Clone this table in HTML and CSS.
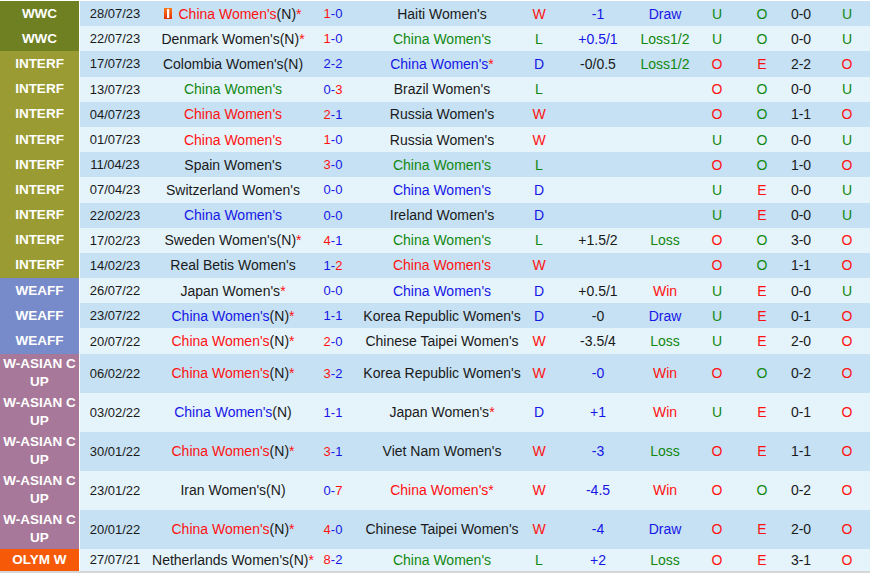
FILE: index.html
```html
<!DOCTYPE html>
<html>
<head>
<meta charset="utf-8">
<title>China Women's results</title>
<link rel="stylesheet" href="styles.css">
</head>
<body>
<div class="table">
  <div class="row odd">
    <div class="c lg wwc">WWC</div><div class="c date">28/07/23</div>
    <div class="c home"><svg class="flag" width="8" height="11" viewBox="0 0 8 11"><defs><linearGradient id="fg" x1="0" y1="0" x2="0" y2="1"><stop offset="0" stop-color="#ff7a1a"/><stop offset="1" stop-color="#e0300a"/></linearGradient></defs><rect width="8" height="11" fill="url(#fg)"/><rect x="3" y="1" width="2.2" height="9" fill="#fff"/></svg><span class="r">China Women's</span>(N)<span class="r">*</span></div>
    <div class="c score"><span class="r">1</span><span class="b">-0</span></div>
    <div class="c away">Haiti Women's</div><div class="c res r">W</div>
    <div class="c hc b">-1</div><div class="c oc b">Draw</div>
    <div class="c uo g">U</div><div class="c oe g">O</div><div class="c ht">0-0</div><div class="c hu g">U</div>
  </div>
  <div class="row even">
    <div class="c lg wwc">WWC</div><div class="c date">22/07/23</div>
    <div class="c home">Denmark Women's(N)<span class="r">*</span></div>
    <div class="c score"><span class="r">1</span><span class="b">-0</span></div>
    <div class="c away g">China Women's</div><div class="c res g">L</div>
    <div class="c hc b">+0.5/1</div><div class="c oc g">Loss1/2</div>
    <div class="c uo g">U</div><div class="c oe g">O</div><div class="c ht">0-0</div><div class="c hu g">U</div>
  </div>
  <div class="row odd">
    <div class="c lg interf">INTERF</div><div class="c date">17/07/23</div>
    <div class="c home">Colombia Women's(N)</div>
    <div class="c score b">2-2</div>
    <div class="c away"><span class="b">China Women's</span><span class="r">*</span></div><div class="c res b">D</div>
    <div class="c hc">-0/0.5</div><div class="c oc g">Loss1/2</div>
    <div class="c uo r">O</div><div class="c oe r">E</div><div class="c ht">2-2</div><div class="c hu r">O</div>
  </div>
  <div class="row even">
    <div class="c lg interf">INTERF</div><div class="c date">13/07/23</div>
    <div class="c home g">China Women's</div>
    <div class="c score"><span class="b">0-</span><span class="r">3</span></div>
    <div class="c away">Brazil Women's</div><div class="c res g">L</div>
    <div class="c hc"></div><div class="c oc"></div>
    <div class="c uo r">O</div><div class="c oe g">O</div><div class="c ht">0-0</div><div class="c hu g">U</div>
  </div>
  <div class="row odd">
    <div class="c lg interf">INTERF</div><div class="c date">04/07/23</div>
    <div class="c home r">China Women's</div>
    <div class="c score"><span class="r">2</span><span class="b">-1</span></div>
    <div class="c away">Russia Women's</div><div class="c res r">W</div>
    <div class="c hc"></div><div class="c oc"></div>
    <div class="c uo r">O</div><div class="c oe g">O</div><div class="c ht">1-1</div><div class="c hu r">O</div>
  </div>
  <div class="row even">
    <div class="c lg interf">INTERF</div><div class="c date">01/07/23</div>
    <div class="c home r">China Women's</div>
    <div class="c score"><span class="r">1</span><span class="b">-0</span></div>
    <div class="c away">Russia Women's</div><div class="c res r">W</div>
    <div class="c hc"></div><div class="c oc"></div>
    <div class="c uo g">U</div><div class="c oe g">O</div><div class="c ht">0-0</div><div class="c hu g">U</div>
  </div>
  <div class="row odd">
    <div class="c lg interf">INTERF</div><div class="c date">11/04/23</div>
    <div class="c home">Spain Women's</div>
    <div class="c score"><span class="r">3</span><span class="b">-0</span></div>
    <div class="c away g">China Women's</div><div class="c res g">L</div>
    <div class="c hc"></div><div class="c oc"></div>
    <div class="c uo r">O</div><div class="c oe g">O</div><div class="c ht">1-0</div><div class="c hu r">O</div>
  </div>
  <div class="row even">
    <div class="c lg interf">INTERF</div><div class="c date">07/04/23</div>
    <div class="c home">Switzerland Women's</div>
    <div class="c score b">0-0</div>
    <div class="c away b">China Women's</div><div class="c res b">D</div>
    <div class="c hc"></div><div class="c oc"></div>
    <div class="c uo g">U</div><div class="c oe r">E</div><div class="c ht">0-0</div><div class="c hu g">U</div>
  </div>
  <div class="row odd">
    <div class="c lg interf">INTERF</div><div class="c date">22/02/23</div>
    <div class="c home b">China Women's</div>
    <div class="c score b">0-0</div>
    <div class="c away">Ireland Women's</div><div class="c res b">D</div>
    <div class="c hc"></div><div class="c oc"></div>
    <div class="c uo g">U</div><div class="c oe r">E</div><div class="c ht">0-0</div><div class="c hu g">U</div>
  </div>
  <div class="row even">
    <div class="c lg interf">INTERF</div><div class="c date">17/02/23</div>
    <div class="c home">Sweden Women's(N)<span class="r">*</span></div>
    <div class="c score"><span class="r">4</span><span class="b">-1</span></div>
    <div class="c away g">China Women's</div><div class="c res g">L</div>
    <div class="c hc">+1.5/2</div><div class="c oc g">Loss</div>
    <div class="c uo r">O</div><div class="c oe g">O</div><div class="c ht">3-0</div><div class="c hu r">O</div>
  </div>
  <div class="row odd">
    <div class="c lg interf">INTERF</div><div class="c date">14/02/23</div>
    <div class="c home">Real Betis Women's</div>
    <div class="c score"><span class="b">1-</span><span class="r">2</span></div>
    <div class="c away r">China Women's</div><div class="c res r">W</div>
    <div class="c hc"></div><div class="c oc"></div>
    <div class="c uo r">O</div><div class="c oe g">O</div><div class="c ht">1-1</div><div class="c hu r">O</div>
  </div>
  <div class="row even">
    <div class="c lg weaff">WEAFF</div><div class="c date">26/07/22</div>
    <div class="c home">Japan Women's<span class="r">*</span></div>
    <div class="c score b">0-0</div>
    <div class="c away b">China Women's</div><div class="c res b">D</div>
    <div class="c hc">+0.5/1</div><div class="c oc r">Win</div>
    <div class="c uo g">U</div><div class="c oe r">E</div><div class="c ht">0-0</div><div class="c hu g">U</div>
  </div>
  <div class="row odd">
    <div class="c lg weaff">WEAFF</div><div class="c date">23/07/22</div>
    <div class="c home"><span class="b">China Women's</span>(N)<span class="r">*</span></div>
    <div class="c score b">1-1</div>
    <div class="c away">Korea Republic Women's</div><div class="c res b">D</div>
    <div class="c hc">-0</div><div class="c oc b">Draw</div>
    <div class="c uo g">U</div><div class="c oe r">E</div><div class="c ht">0-1</div><div class="c hu r">O</div>
  </div>
  <div class="row even">
    <div class="c lg weaff">WEAFF</div><div class="c date">20/07/22</div>
    <div class="c home"><span class="r">China Women's</span>(N)<span class="r">*</span></div>
    <div class="c score"><span class="r">2</span><span class="b">-0</span></div>
    <div class="c away">Chinese Taipei Women's</div><div class="c res r">W</div>
    <div class="c hc">-3.5/4</div><div class="c oc g">Loss</div>
    <div class="c uo g">U</div><div class="c oe r">E</div><div class="c ht">2-0</div><div class="c hu r">O</div>
  </div>
  <div class="row odd tall">
    <div class="c lg wasian">W-ASIAN C UP</div><div class="c date">06/02/22</div>
    <div class="c home"><span class="r">China Women's</span>(N)<span class="r">*</span></div>
    <div class="c score"><span class="r">3</span><span class="b">-2</span></div>
    <div class="c away">Korea Republic Women's</div><div class="c res r">W</div>
    <div class="c hc b">-0</div><div class="c oc r">Win</div>
    <div class="c uo r">O</div><div class="c oe g">O</div><div class="c ht">0-2</div><div class="c hu r">O</div>
  </div>
  <div class="row even tall">
    <div class="c lg wasian">W-ASIAN C UP</div><div class="c date">03/02/22</div>
    <div class="c home"><span class="b">China Women's</span>(N)</div>
    <div class="c score b">1-1</div>
    <div class="c away">Japan Women's<span class="r">*</span></div><div class="c res b">D</div>
    <div class="c hc b">+1</div><div class="c oc r">Win</div>
    <div class="c uo g">U</div><div class="c oe r">E</div><div class="c ht">0-1</div><div class="c hu r">O</div>
  </div>
  <div class="row odd tall">
    <div class="c lg wasian">W-ASIAN C UP</div><div class="c date">30/01/22</div>
    <div class="c home"><span class="r">China Women's</span>(N)<span class="r">*</span></div>
    <div class="c score"><span class="r">3</span><span class="b">-1</span></div>
    <div class="c away">Viet Nam Women's</div><div class="c res r">W</div>
    <div class="c hc b">-3</div><div class="c oc g">Loss</div>
    <div class="c uo r">O</div><div class="c oe r">E</div><div class="c ht">1-1</div><div class="c hu r">O</div>
  </div>
  <div class="row even tall">
    <div class="c lg wasian">W-ASIAN C UP</div><div class="c date">23/01/22</div>
    <div class="c home">Iran Women's(N)</div>
    <div class="c score"><span class="b">0-</span><span class="r">7</span></div>
    <div class="c away"><span class="r">China Women's*</span></div><div class="c res r">W</div>
    <div class="c hc b">-4.5</div><div class="c oc r">Win</div>
    <div class="c uo r">O</div><div class="c oe g">O</div><div class="c ht">0-2</div><div class="c hu r">O</div>
  </div>
  <div class="row odd tall">
    <div class="c lg wasian">W-ASIAN C UP</div><div class="c date">20/01/22</div>
    <div class="c home"><span class="r">China Women's</span>(N)<span class="r">*</span></div>
    <div class="c score"><span class="r">4</span><span class="b">-0</span></div>
    <div class="c away">Chinese Taipei Women's</div><div class="c res r">W</div>
    <div class="c hc b">-4</div><div class="c oc b">Draw</div>
    <div class="c uo r">O</div><div class="c oe r">E</div><div class="c ht">2-0</div><div class="c hu r">O</div>
  </div>
  <div class="row even last">
    <div class="c lg olym">OLYM W</div><div class="c date">27/07/21</div>
    <div class="c home">Netherlands Women's(N)<span class="r">*</span></div>
    <div class="c score"><span class="r">8</span><span class="b">-2</span></div>
    <div class="c away g">China Women's</div><div class="c res g">L</div>
    <div class="c hc b">+2</div><div class="c oc g">Loss</div>
    <div class="c uo r">O</div><div class="c oe r">E</div><div class="c ht">3-1</div><div class="c hu r">O</div>
  </div>
</div>
</body>
</html>
```

FILE: styles.css
```css
html, body {
  margin: 0;
  padding: 0;
  background: #fff;
}

body {
  font-family: "Liberation Sans", Arial, sans-serif;
  color: #1a1a1a;
}

.table {
  padding-top: 1px;
  border-bottom: 2px solid #d6d6d6;
}

.row {
  display: grid;
  grid-template-columns: 80px 70px 166px 34px 176px 26px 90px 46px 58px 32px 46px 46px;
  height: 25.2px;
}

.row.tall {
  height: 39px;
}

.row.last {
  height: 22.2px;
}

.row.odd {
  background: #c6e1f3;
}

.row.even {
  background: #e5f3fb;
}

.c {
  display: flex;
  align-items: center;
  justify-content: center;
  white-space: nowrap;
  font-size: 14px;
  min-width: 0;
}

.lg {
  color: #fff;
  font-weight: bold;
  font-size: 13.5px;
  line-height: 18px;
  white-space: normal;
  text-align: center;
  border-right: 1px solid #fff;
  padding: 0 2px;
}

.wwc { background: #6e8021; }
.interf { background: #9a9b33; }
.weaff { background: #778ac9; }
.wasian { background: #a77899; }
.olym { background: #f65a08; }

.date,
.score {
  font-size: 13px;
}

.away {
  padding-left: 8px;
}

.hc {
  padding-left: 2px;
}

.flag {
  margin-right: 6px;
  flex: none;
}

.r { color: #ff1111; }
.b { color: #1616e6; }
.g { color: #118811; }
```
